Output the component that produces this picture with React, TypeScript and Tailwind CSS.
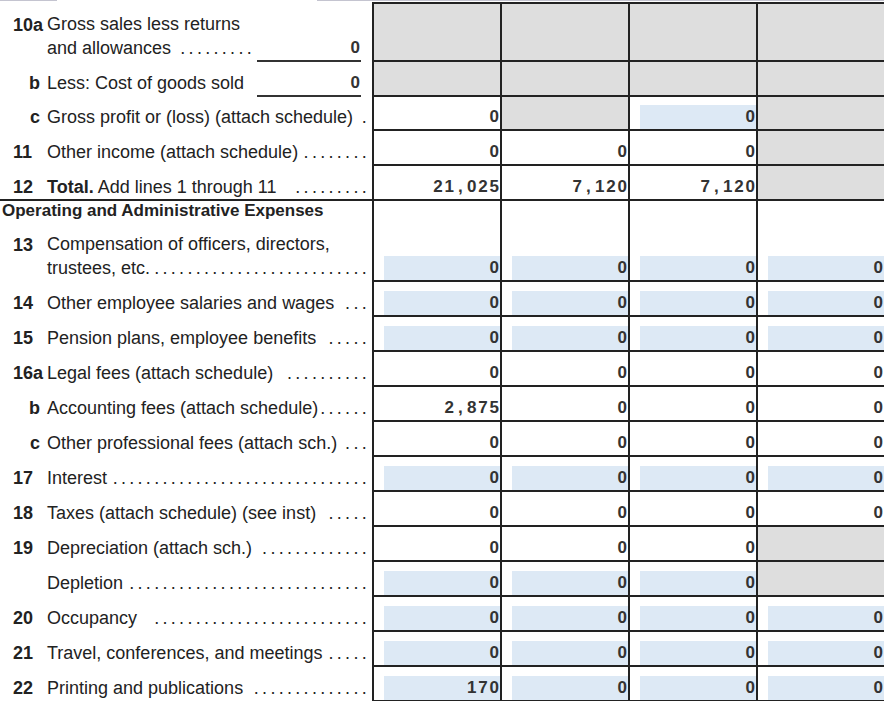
import React from "react";

type CellData = { k: "g" | "b" | "w"; v?: string };

const g: CellData = { k: "g" };
const b = (v: string): CellData => ({ k: "b", v });
const w = (v: string): CellData => ({ k: "w", v });

// fixed-pitch amounts, one slot per character like the printed form
function Amount({ v }: { v: string }) {
  return (
    <span className="inline-flex font-bold text-[17px] text-[#333]">
      {v.split("").map((ch, i) => (
        <span key={i} className="w-[11.3px] text-center">
          {ch}
        </span>
      ))}
    </span>
  );
}

function Cell({ k, v, top }: CellData & { top?: boolean }) {
  return (
    <div
      className={`w-[128px] shrink-0 border-l-2 border-b-2 border-[#222] flex items-end ${top ? "border-t-2" : ""} ${
        k === "g" ? "bg-[#dedede]" : ""
      }`}
    >
      {k !== "g" && (
        <div
          className={`ml-[10px] flex-1 h-[24px] flex justify-end leading-[24px] ${k === "b" ? "bg-[#dde9f5]" : ""}`}
        >
          {v && <Amount v={v} />}
        </div>
      )}
    </div>
  );
}

// dot leader pushed to the right edge of the label column
function Leader({ n, className = "ml-[3px]" }: { n: number; className?: string }) {
  return (
    <span className={`flex-1 min-w-0 flex justify-end whitespace-nowrap ${className}`}>
      <span className="tracking-[3.3px]">{".".repeat(n)}</span>
    </span>
  );
}

function Num({ n }: { n?: string }) {
  const letter = n === "b" || n === "c";
  return (
    <span className={`w-[47px] shrink-0 pl-[13px] font-bold ${letter ? "text-right pr-[7px]" : ""}`}>{n}</span>
  );
}

function Field() {
  return (
    <div className="ml-[2px] mr-[9px] -mb-[2px] w-[104px] shrink-0 h-[26px] border-b-2 border-[#333] flex justify-end leading-[24px]">
      <Amount v="0" />
    </div>
  );
}

function Row({
  h,
  left,
  cells,
  line,
  col,
  top,
}: {
  h: string;
  left: React.ReactNode;
  cells: CellData[];
  line?: boolean;
  col?: boolean;
  top?: boolean;
}) {
  return (
    <div className={`flex ${h}`}>
      <div
        className={`w-[372px] shrink-0 flex pr-[2px] text-[18px] leading-[24px] text-[#222] ${
          col ? "flex-col justify-between" : "items-end"
        } ${line ? "border-b-2 border-[#222]" : "pb-[2px]"}`}
      >
        {left}
      </div>
      {cells.map((c, i) => (
        <Cell key={i} {...c} top={top} />
      ))}
    </div>
  );
}

type Line = { n?: string; text: React.ReactNode; dots: number; lead?: string; cells: CellData[] };

function Simple({ n, text, dots, lead }: Omit<Line, "cells">) {
  return (
    <>
      <Num n={n} />
      <span className="whitespace-nowrap">{text}</span>
      <Leader n={dots} className={lead} />
    </>
  );
}

const rows: (Line & { line?: boolean; h: string })[] = [
  { n: "c", text: "Gross profit or (loss) (attach schedule)", dots: 1, lead: "ml-[4px]", cells: [w("0"), g, b("0"), g], h: "h-[34px]" },
  { n: "11", text: "Other income (attach schedule)", dots: 8, cells: [w("0"), w("0"), w("0"), g], h: "h-[35px]" },
  {
    n: "12",
    text: (
      <>
        <b>Total.</b> Add lines 1 through 11
      </>
    ),
    dots: 9,
    lead: "ml-[14px]",
    cells: [w("21,025"), w("7,120"), w("7,120"), g],
    line: true,
    h: "h-[35px]",
  },
];

const rows2: Line[] = [
  { n: "14", text: "Other employee salaries and wages", dots: 3, lead: "ml-[5px]", cells: [b("0"), b("0"), b("0"), b("0")] },
  { n: "15", text: "Pension plans, employee benefits", dots: 5, lead: "ml-[7px]", cells: [b("0"), b("0"), b("0"), b("0")] },
  { n: "16a", text: "Legal fees (attach schedule)", dots: 10, lead: "ml-[9px]", cells: [w("0"), w("0"), w("0"), w("0")] },
  { n: "b", text: "Accounting fees (attach schedule)", dots: 6, lead: "ml-[1px]", cells: [w("2,875"), w("0"), w("0"), w("0")] },
  { n: "c", text: "Other professional fees (attach sch.)", dots: 3, lead: "ml-[4px]", cells: [w("0"), w("0"), w("0"), w("0")] },
  { n: "17", text: "Interest", dots: 31, lead: "ml-[1px]", cells: [b("0"), b("0"), b("0"), b("0")] },
  { n: "18", text: "Taxes (attach schedule) (see inst)", dots: 5, lead: "ml-[7px]", cells: [w("0"), w("0"), w("0"), w("0")] },
  { n: "19", text: "Depreciation (attach sch.)", dots: 13, lead: "ml-[6px]", cells: [w("0"), w("0"), w("0"), g] },
  { text: "Depletion", dots: 29, lead: "ml-[1px]", cells: [b("0"), b("0"), b("0"), g] },
  { n: "20", text: "Occupancy", dots: 26, lead: "ml-[9px]", cells: [b("0"), b("0"), b("0"), b("0")] },
  { n: "21", text: "Travel, conferences, and meetings", dots: 5, lead: "ml-[5px]", cells: [b("0"), b("0"), b("0"), b("0")] },
  { n: "22", text: "Printing and publications", dots: 14, lead: "ml-[5px]", cells: [b("170"), b("0"), b("0"), b("0")] },
];

export default function App() {
  return (
    <div className="w-[884px] h-[701px] overflow-hidden bg-white font-['Liberation_Sans',Arial,sans-serif]">
      {/* remnant of the row above */}
      <div className="h-[2px] flex items-start">
        <span className="w-[57px] h-[1px] bg-[#c4c4d0]" />
        <span className="ml-[260px] flex-1 h-[1px] bg-[#c4c4d0]" />
      </div>

      <Row
        h="h-[60px]"
        top
        cells={[g, g, g, g]}
        left={
          <div className="flex flex-1 min-w-0 items-start">
            <Num n="10a" />
            <div className="flex-1 min-w-0">
              <div className="leading-[23px] whitespace-nowrap">Gross sales less returns</div>
              <div className="flex items-end">
                <span className="whitespace-nowrap">and allowances</span>
                <Leader n={9} className="ml-[5px]" />
                <Field />
              </div>
            </div>
          </div>
        }
      />
      <Row
        h="h-[35px]"
        cells={[g, g, g, g]}
        left={
          <>
            <Num n="b" />
            <span className="whitespace-nowrap">Less: Cost of goods sold</span>
            <span className="flex-1" />
            <Field />
          </>
        }
      />
      {rows.map((r, i) => (
        <Row key={i} h={r.h} line={r.line} cells={r.cells} left={<Simple n={r.n} text={r.text} dots={r.dots} lead={r.lead} />} />
      ))}

      <Row
        h="h-[81px]"
        col
        cells={[b("0"), b("0"), b("0"), b("0")]}
        left={
          <>
            <div className="pl-[2px] font-bold text-[17px] leading-[20px] whitespace-nowrap">
              Operating and Administrative Expenses
            </div>
            <div className="flex">
              <Num n="13" />
              <div className="flex-1 min-w-0">
                <div className="leading-[23px] whitespace-nowrap">Compensation of officers, directors,</div>
                <div className="flex">
                  <span className="whitespace-nowrap">trustees, etc.</span>
                  <Leader n={26} className="ml-[2px]" />
                </div>
              </div>
            </div>
          </>
        }
      />
      {rows2.map((r, i) => (
        <Row key={i} h="h-[35px]" cells={r.cells} left={<Simple n={r.n} text={r.text} dots={r.dots} lead={r.lead} />} />
      ))}
    </div>
  );
}
